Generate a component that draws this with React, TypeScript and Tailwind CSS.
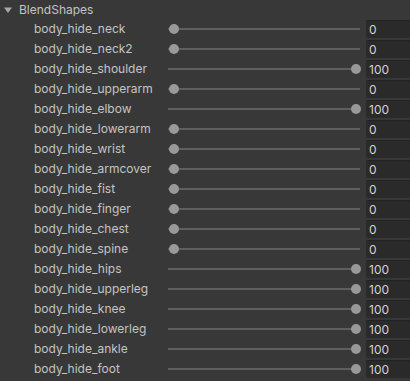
import React from 'react';

const shapes: [string, number][] = [
  ['neck', 0],
  ['neck2', 0],
  ['shoulder', 100],
  ['upperarm', 0],
  ['elbow', 100],
  ['lowerarm', 0],
  ['wrist', 0],
  ['armcover', 0],
  ['fist', 0],
  ['finger', 0],
  ['chest', 0],
  ['spine', 0],
  ['hips', 100],
  ['upperleg', 100],
  ['knee', 100],
  ['lowerleg', 100],
  ['ankle', 100],
  ['foot', 100],
];

function Slider({ value }: { value: number }) {
  return (
    <div className="relative w-[194px] h-full shrink-0">
      <div className="absolute left-0 right-[2px] top-1/2 -translate-y-1/2 h-[2px] bg-[#5e5e5e]" />
      <div
        className="absolute top-1/2 -translate-y-1/2 w-[10px] h-[10px] rounded-full bg-[#999999]"
        style={{ left: `${1 + (value / 100) * 182}px` }}
      />
    </div>
  );
}

export default function App() {
  return (
    <div
      className="w-[410px] h-[381px] overflow-hidden bg-[#383838] text-[#c4c4c4] text-[12px]"
      style={{ fontFamily: 'Inter, "Noto Sans", sans-serif' }}
    >
      {/* Foldout header */}
      <div className="h-[19px] flex items-center pl-[4px]">
        <svg width="8" height="8" viewBox="0 0 8 8" className="mr-[7px]">
          <path d="M0 1.5 L8 1.5 L4 7 Z" fill="#a8a8a8" />
        </svg>
        <span>BlendShapes</span>
      </div>

      {shapes.map(([name, value]) => (
        <div key={name} className="h-[20px] flex items-center pl-[34px]">
          <div className="w-[134px] shrink-0 whitespace-nowrap leading-[20px]">body_hide_{name}</div>
          <Slider value={value} />
          <div className="ml-[4px] h-[18px] flex-1 min-w-0 bg-[#2a2a2a] border-t border-[#212121] rounded-l-[2px] flex items-center pl-[3px] text-[#d2d2d2]">
            {value}
          </div>
        </div>
      ))}
    </div>
  );
}
